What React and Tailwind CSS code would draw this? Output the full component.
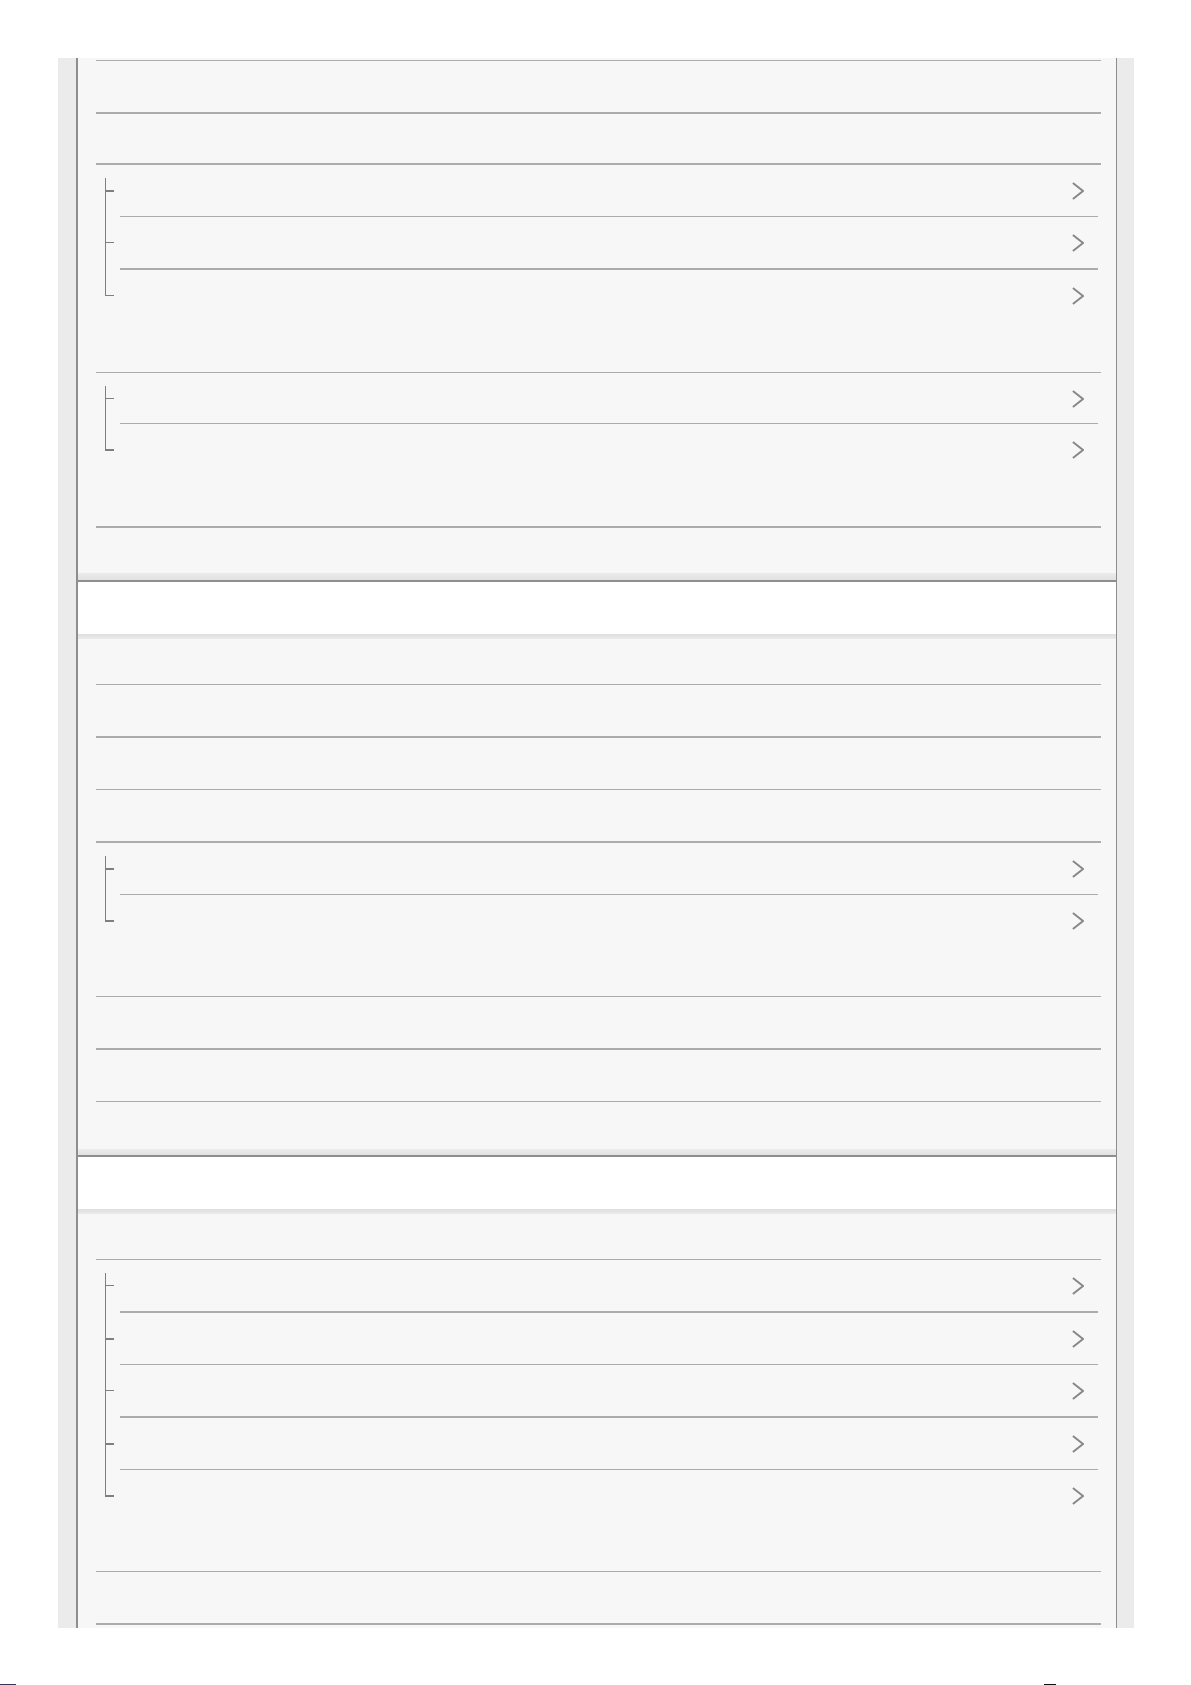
// Blank outline page: grey panel with separator rows, tree groups and section headers.

const LINE = "border-[#acacac]";

const SECTIONS = [
  {
    rows: [
      { h: "h-[3px]", b: "border-b" },
      { h: "h-[53px]", b: "border-b-2" },
      { h: "h-[51px]", b: "border-b-2" },
      {
        tree: [
          { h: "h-[52px]", b: "border-b", tick: "h-[2px]" },
          { h: "h-[53px]", b: "border-b-2", tick: "h-px" },
          { h: "h-[102px]", b: "", tick: "h-px" },
        ],
        b: "border-b",
      },
      {
        tree: [
          { h: "h-[51px]", b: "border-b", tick: "h-px" },
          { h: "h-[102px]", b: "", tick: "h-[2px]" },
        ],
        b: "border-b-2",
      },
      { h: "h-[45px]", b: "" },
    ],
    header: { top: "h-[7px]" },
  },
  {
    rows: [
      { h: "h-[46px]", b: "border-b" },
      { h: "h-[53px]", b: "border-b-2" },
      { h: "h-[52px]", b: "border-b" },
      { h: "h-[53px]", b: "border-b-2" },
      {
        tree: [
          { h: "h-[52px]", b: "border-b", tick: "h-[2px]" },
          { h: "h-[101px]", b: "", tick: "h-[2px]" },
        ],
        b: "border-b",
      },
      { h: "h-[53px]", b: "border-b-2" },
      { h: "h-[52px]", b: "border-b" },
      { h: "h-[47px]", b: "" },
    ],
    header: { top: "h-[6px]" },
  },
  {
    rows: [
      { h: "h-[46px]", b: "border-b" },
      {
        tree: [
          { h: "h-[53px]", b: "border-b-2", tick: "h-px" },
          { h: "h-[52px]", b: "border-b", tick: "h-[2px]" },
          { h: "h-[53px]", b: "border-b-2", tick: "h-px" },
          { h: "h-[52px]", b: "border-b", tick: "h-[2px]" },
          { h: "h-[101px]", b: "", tick: "h-[2px]" },
        ],
        b: "border-b",
      },
      { h: "h-[53px]", b: "border-b-2" },
      { h: "h-[3px]", b: "" },
    ],
  },
];

function Chevron() {
  return (
    <svg width="12" height="18" viewBox="0 0 12 18" fill="none" className="block">
      <path d="M0.9 0.9 L11 9 L0.9 17.1" stroke="#878787" strokeWidth="1.9" />
    </svg>
  );
}

function TreeItem({ item, first, last }) {
  return (
    <div className={`flex ${item.h}`}>
      {/* connector gutter */}
      <div className="flex w-[24px] shrink-0 flex-col">
        <div
          className={
            first
              ? "ml-[9px] mt-[13px] h-[12px] w-px bg-[#7f7f7f]"
              : "ml-[9px] h-[25px] w-px bg-[#7f7f7f]"
          }
        />
        <div className={`ml-[9px] w-[9px] shrink-0 bg-[#7f7f7f] ${item.tick}`} />
        {!last && <div className="ml-[9px] w-px flex-1 bg-[#7f7f7f]" />}
      </div>
      <div className={`mr-[3px] flex-1 ${item.b} ${LINE}`}>
        <div className="flex h-[51px] items-center justify-end pr-[14px]">
          <Chevron />
        </div>
      </div>
    </div>
  );
}

function Row({ row }) {
  if (row.tree) {
    return (
      <div className={`${row.b} ${LINE}`}>
        {row.tree.map((item, i) => (
          <TreeItem
            key={i}
            item={item}
            first={i === 0}
            last={i === row.tree.length - 1}
          />
        ))}
      </div>
    );
  }
  return <div className={`${row.h} ${row.b} ${LINE}`} />;
}

function Header({ top }) {
  return (
    <div>
      <div className={`${top} bg-linear-to-b from-[#ececec] to-[#e1e1e1]`} />
      <div className="h-[2px] bg-[#8e8e8e]" />
      <div className="h-[52px] bg-white" />
      <div className="h-[5px] bg-linear-to-b from-[#dedede] to-[#ebebeb]" />
    </div>
  );
}

export default function App() {
  return (
    <div className="min-h-[1685px] bg-white pt-[58px]">
      <div className="ml-[58px] flex w-[1076px]">
        <div className="w-[18px] shrink-0 bg-[#ebebeb]" />
        <div className="flex-1 border-l-2 border-r border-[#8e8e8e] bg-[#f7f7f7]">
          {SECTIONS.map((section, s) => (
            <div key={s}>
              <div className="pl-[18px] pr-[15px]">
                {section.rows.map((row, r) => (
                  <Row key={r} row={row} />
                ))}
              </div>
              {section.header && <Header top={section.header.top} />}
            </div>
          ))}
        </div>
        <div className="w-[17px] shrink-0 bg-[#ebebeb]" />
      </div>

      {/* tops of the next page's glyphs peeking in at the bottom edge */}
      <div className="mt-[56px] flex h-px">
        <div className="w-[16px] bg-[#3b3552]" />
        <div className="ml-[1028px] w-[12px] bg-[#111111]" />
      </div>
    </div>
  );
}
